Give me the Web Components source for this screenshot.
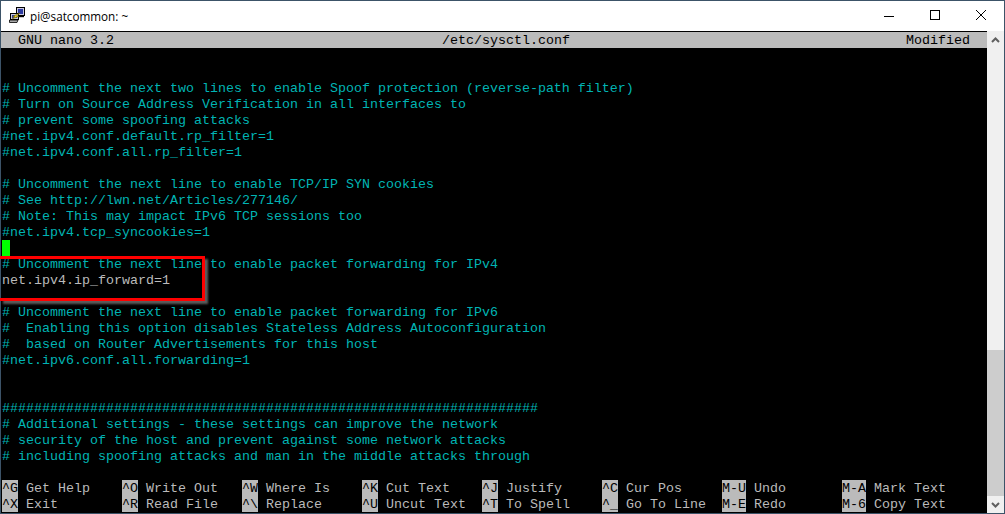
<!DOCTYPE html>
<html lang="en">
<head>
<meta charset="UTF-8">
<title>pi@satcommon: ~</title>
<style>
    html, body { margin: 0; height: 100%; background: #000; overflow: hidden; }
</style>
</head>
<body>
<template id="win-tmpl">
    <style>
        :host { display: flex; flex-direction: column; width: 1005px; height: 514px; box-sizing: border-box;
            border: 1px solid #3c5368; background: #fff; }
        .main { flex: 1; display: flex; min-height: 0; }
    </style>
    <slot name="title"></slot>
    <div class="main">
        <slot name="term"></slot>
        <slot name="bar"></slot>
    </div>
</template>

<template id="title-tmpl">
    <style>
        :host { display: flex; align-items: center; height: 30px; flex: none; background: #fff;
            font: 11.7px "Open Sans", "Liberation Sans", sans-serif; color: #000; }
        .icon { width: 16px; height: 16px; margin: 0 5px 2px 8px; flex: none; }
        .name { flex: 1; }
        .btn { width: 46px; height: 30px; display: flex; align-items: center; justify-content: center; }
        .btn svg { width: 10px; height: 10px; display: block; margin-bottom: 2px; overflow: visible; }
    </style>
    <svg class="icon" viewBox="0 0 16 16">
        <rect x="7.5" y="0.5" width="8" height="8" fill="#c8c8e0" stroke="#000"/>
        <rect x="9" y="2" width="5" height="5" fill="#2c3aa0"/>
        <path d="M8 9.5h7" stroke="#000" stroke-width="1.4"/>
        <rect x="1.5" y="6.5" width="8" height="6" fill="#c8c8e0" stroke="#000"/>
        <rect x="3" y="8" width="5" height="3" fill="#2c3aa0"/>
        <path d="M0.5 13h8.5l-1 2.5H0.5z" fill="#a8a8a8" stroke="#000" stroke-width="0.8"/>
        <path d="M11 6 3.5 9.5l2.5.3-3 2.2L9.5 9.5 7.5 9z" fill="#f4d820" stroke="#6b5a00" stroke-width="0.5"/>
    </svg>
    <span class="name"><slot></slot></span>
    <div class="btn"><svg viewBox="0 0 10 10"><path d="M0 6.5h10" stroke="#000" stroke-width="1"/></svg></div>
    <div class="btn"><svg viewBox="0 0 10 10"><rect x="0.5" y="0.5" width="9" height="9" fill="none" stroke="#000"/></svg></div>
    <div class="btn"><svg viewBox="0 0 10 10"><path d="M0 0l10 10M10 0 0 10" stroke="#000" stroke-width="1" fill="none"/></svg></div>
</template>

<template id="term-tmpl">
    <style>
        :host { display: block; position: relative; flex: 1; min-width: 0; background: #000; padding: 1px 0 0 0;
            font: 13.33px/18px "Liberation Mono", "Courier New", monospace; color: #bbb; }
        .mark { position: absolute; left: -1px; top: 225px; width: 205px; height: 45px; box-sizing: border-box;
            border: 3px solid #f00; border-left: 0; box-shadow: 3px 3px 2px rgba(115,115,115,.8); }
    </style>
    <slot></slot>
    <div class="mark"></div>
</template>

<template id="line-tmpl">
    <style>
        :host { display: block; height: 16px; padding-left: 1px; color: #bbb; }
        :host([tone="c"]) { color: #00b4b4; }
        span { white-space: pre; }
    </style>
    <span><slot></slot></span>
</template>

<template id="head-tmpl">
    <style>
        :host { display: grid; grid-template-columns: 424px 1fr auto; height: 16px; background: #bbb; color: #000;
            padding: 0 17px; }
        span { white-space: pre; }
    </style>
    <span><slot name="a"></slot></span>
    <span><slot name="b"></slot></span>
    <span><slot name="c"></slot></span>
</template>

<template id="keys-tmpl">
    <style>
        :host { display: grid; grid-template-columns: repeat(8, 120px); grid-auto-rows: 16px; height: 32px; padding-left: 1px; }
    </style>
    <slot></slot>
</template>

<template id="key-tmpl">
    <style>
        :host { display: flex; color: #bbb; }
        b { font-weight: normal; background: #bbb; color: #000; flex: none; white-space: pre; margin-right: 8px; }
        span { white-space: pre; }
    </style>
    <b></b><span><slot></slot></span>
</template>

<template id="bar-tmpl">
    <style>
        :host { display: flex; flex-direction: column; width: 17px; flex: none; background: #f0f0f0; }
        .arrow { height: 17px; flex: none; display: flex; align-items: center; justify-content: center; }
        .arrow svg { width: 9px; height: 6px; display: block; }
        .track { flex: 1; display: flex; flex-direction: column; justify-content: flex-end; }
        .thumb { height: 146px; background: #cdcdcd; }
    </style>
    <div class="arrow"><svg viewBox="0 0 9 6"><path d="M1 5l3.5-3.5L8 5" fill="none" stroke="#606060" stroke-width="2"/></svg></div>
    <div class="track"><div class="thumb"></div></div>
    <div class="arrow"><svg viewBox="0 0 9 6"><path d="M1 1l3.5 3.5L8 1" fill="none" stroke="#606060" stroke-width="2"/></svg></div>
</template>

<putty-window>
    <putty-title slot="title">pi@satcommon: ~</putty-title>
    <term-view slot="term">
        <nano-head><span slot="a">GNU nano 3.2</span><span slot="b">/etc/sysctl.conf</span><span slot="c">Modified</span></nano-head>
        <term-line></term-line>
        <term-line></term-line>
        <term-line tone="c"># Uncomment the next two lines to enable Spoof protection (reverse-path filter)</term-line>
        <term-line tone="c"># Turn on Source Address Verification in all interfaces to</term-line>
        <term-line tone="c"># prevent some spoofing attacks</term-line>
        <term-line tone="c">#net.ipv4.conf.default.rp_filter=1</term-line>
        <term-line tone="c">#net.ipv4.conf.all.rp_filter=1</term-line>
        <term-line></term-line>
        <term-line tone="c"># Uncomment the next line to enable TCP/IP SYN cookies</term-line>
        <term-line tone="c"># See http://lwn.net/Articles/277146/</term-line>
        <term-line tone="c"># Note: This may impact IPv6 TCP sessions too</term-line>
        <term-line tone="c">#net.ipv4.tcp_syncookies=1</term-line>
        <term-line><span style="display:block;width:8px;height:16px;background:#0f0"></span></term-line>
        <term-line tone="c"># Uncomment the next line to enable packet forwarding for IPv4</term-line>
        <term-line>net.ipv4.ip_forward=1</term-line>
        <term-line></term-line>
        <term-line tone="c"># Uncomment the next line to enable packet forwarding for IPv6</term-line>
        <term-line tone="c">#  Enabling this option disables Stateless Address Autoconfiguration</term-line>
        <term-line tone="c">#  based on Router Advertisements for this host</term-line>
        <term-line tone="c">#net.ipv6.conf.all.forwarding=1</term-line>
        <term-line></term-line>
        <term-line></term-line>
        <term-line tone="c">###################################################################</term-line>
        <term-line tone="c"># Additional settings - these settings can improve the network</term-line>
        <term-line tone="c"># security of the host and prevent against some network attacks</term-line>
        <term-line tone="c"># including spoofing attacks and man in the middle attacks through</term-line>
        <term-line></term-line>
        <nano-keys>
            <nano-key k="^G">Get Help</nano-key>
            <nano-key k="^O">Write Out</nano-key>
            <nano-key k="^W">Where Is</nano-key>
            <nano-key k="^K">Cut Text</nano-key>
            <nano-key k="^J">Justify</nano-key>
            <nano-key k="^C">Cur Pos</nano-key>
            <nano-key k="M-U">Undo</nano-key>
            <nano-key k="M-A">Mark Text</nano-key>
            <nano-key k="^X">Exit</nano-key>
            <nano-key k="^R">Read File</nano-key>
            <nano-key k="^\">Replace</nano-key>
            <nano-key k="^U">Uncut Text</nano-key>
            <nano-key k="^T">To Spell</nano-key>
            <nano-key k="^_">Go To Line</nano-key>
            <nano-key k="M-E">Redo</nano-key>
            <nano-key k="M-6">Copy Text</nano-key>
        </nano-keys>
    </term-view>
    <scroll-bar slot="bar"></scroll-bar>
</putty-window>

<script>
    const simple = (tag, tmplId) => customElements.define(tag, class extends HTMLElement {
        connectedCallback() {
            if (this.shadowRoot) return;
            this.attachShadow({ mode: 'open' });
            this.shadowRoot.append(document.getElementById(tmplId).content.cloneNode(true));
        }
    });

    simple('putty-window', 'win-tmpl');
    simple('putty-title', 'title-tmpl');
    simple('term-view', 'term-tmpl');
    simple('term-line', 'line-tmpl');
    simple('nano-head', 'head-tmpl');
    simple('nano-keys', 'keys-tmpl');
    simple('scroll-bar', 'bar-tmpl');

    customElements.define('nano-key', class extends HTMLElement {
        connectedCallback() {
            this.attachShadow({ mode: 'open' });
            this.shadowRoot.append(document.getElementById('key-tmpl').content.cloneNode(true));
            this.shadowRoot.querySelector('b').textContent = this.getAttribute('k');
        }
    });
</script>
</body>
</html>
